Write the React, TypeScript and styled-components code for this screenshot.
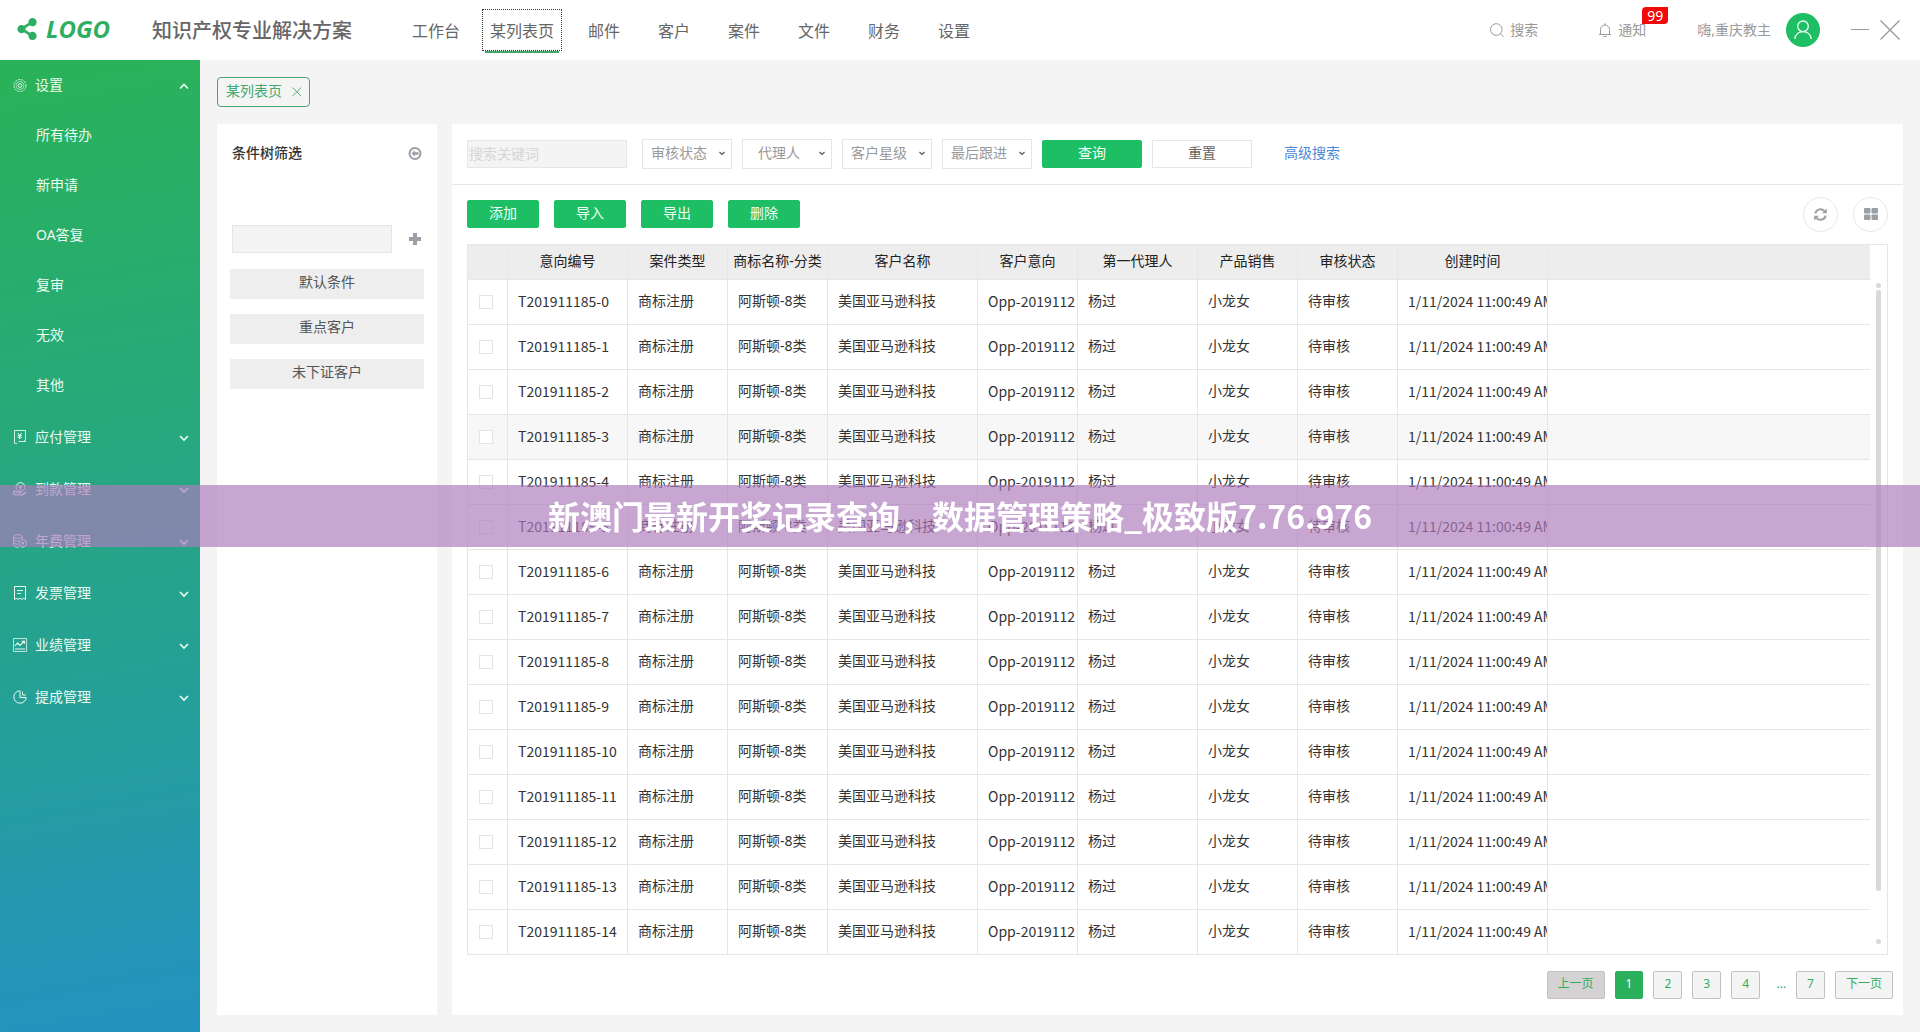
import React, { useState } from "react";
import styled, { createGlobalStyle, css } from "styled-components";
import { FaShareAlt } from "react-icons/fa";

const GREEN = "#1dbe64";
const LINE = "#e6e6e6";
const FONT = '"Noto Sans", "Noto Sans CJK SC", sans-serif';

const GlobalStyle = createGlobalStyle`
  *, *::before, *::after { box-sizing: border-box; }
  body {
    margin: 0;
    background: #f4f4f4;
    color: #333;
    font: 14px/20px ${FONT};
  }
  button, input, select { font: inherit; color: inherit; margin: 0; }
  button { padding: 0; border: 0; background: none; cursor: pointer; }
  a { color: inherit; text-decoration: none; }
  svg { display: block; flex: none; }
`;

const Page = styled.div`
  display: flex;
  flex-direction: column;
  min-height: 100vh;
`;

const Header = styled.header`
  display: flex;
  align-items: center;
  height: 60px;
  padding: 0 20px 0 16px;
  background: #fff;
`;

const Logo = styled.a`
  display: flex;
  align-items: center;
  gap: 8px;
  width: 136px;
  padding-bottom: 2px;
  color: #2eae62;
  font: italic 700 24px/28px "Open Sans", sans-serif;
`;

const Title = styled.h1`
  width: 252px;
  margin: 0;
  padding-top: 2px;
  color: #666;
  font-size: 20px;
  line-height: 28px;
  font-weight: 500;
`;

const TopNav = styled.nav`
  display: flex;
  flex: 1;
  gap: 14px;
`;

const TopLink = styled.a<{ $active?: boolean }>`
  position: relative;
  min-width: 56px;
  padding: 11px 7px 9px;
  border: 1px dotted ${(p) => (p.$active ? "#333" : "transparent")};
  color: #666;
  font-size: 16px;
  line-height: 20px;
  text-align: center;

  ${(p) =>
    p.$active &&
    css`
      &::after {
        content: "";
        position: absolute;
        left: 2px;
        right: 2px;
        bottom: -3px;
        height: 2px;
        background: #3fa56b;
      }
    `}
`;

const Tools = styled.div`
  display: flex;
  align-items: center;
  color: #999;
`;

const ToolButton = styled.button`
  position: relative;
  display: flex;
  align-items: center;
  gap: 6px;
  margin-right: 60px;
`;

const Badge = styled.span`
  position: absolute;
  left: 44px;
  top: -13px;
  padding: 0 5px;
  border-radius: 4px 0 4px 0;
  background: #f00a0a;
  color: #fff;
  line-height: 17px;
`;

const Greeting = styled.span`
  margin: 0 15px 0 -9px;
`;

const Avatar = styled.button`
  display: grid;
  place-items: center;
  width: 34px;
  height: 34px;
  margin-right: 30px;
  border-radius: 50%;
  background: ${GREEN};
`;

const WindowButton = styled.button`
  display: grid;
  place-items: center;
  width: 20px;
  height: 20px;
  & + & { margin-left: 10px; }
`;

const Body = styled.div`
  display: flex;
  flex: 1;
`;

const Sidebar = styled.nav`
  flex: none;
  width: 200px;
  background: linear-gradient(170deg, #2ab25a 2%, #27a87e 40%, #249e9c 70%, #2497b2 86%, #2393c0 100%);
  color: #e9fbf2;
`;

const Group = styled.button`
  display: flex;
  align-items: center;
  width: 100%;
  height: 50px;
  padding: 0 11px 0 13px;
  gap: 8px;
  text-align: left;
  * + & { margin-top: 2px; }
`;

const GroupName = styled.span`
  flex: 1;
`;

const SubLink = styled.a`
  display: block;
  height: 50px;
  padding-left: 36px;
  line-height: 49px;
`;

const Content = styled.main`
  display: flex;
  flex: 1;
  flex-direction: column;
  min-width: 0;
  padding: 17px;
`;

const PageTab = styled.div`
  display: flex;
  align-items: center;
  align-self: flex-start;
  gap: 10px;
  height: 30px;
  margin-bottom: 17px;
  padding: 0 7px 2px 8px;
  border: 1px solid #43a970;
  border-radius: 4px;
  color: #43a970;
`;

const Columns = styled.div`
  display: flex;
  flex: 1;
  gap: 15px;
`;

const Panel = styled.section`
  background: #fff;
`;

const TreePanel = styled(Panel)`
  flex: none;
  width: 220px;
  padding: 19px 13px;
`;

const TreeHead = styled.div`
  display: flex;
  align-items: center;
  justify-content: space-between;
  height: 20px;
  margin-bottom: 62px;
  padding: 0 1px 0 2px;
`;

const TreeTitle = styled.h2`
  margin: 0;
  color: #333;
  font-size: 14px;
  line-height: 20px;
  font-weight: 500;
`;

const AddRow = styled.div`
  display: flex;
  align-items: center;
  justify-content: space-between;
  margin-bottom: 16px;
  padding: 0 1px 0 2px;
`;

const IconButton = styled.button`
  display: grid;
  place-items: center;
  width: 16px;
  height: 16px;
  color: #9aa0a6;
`;

const TextBox = styled.input`
  width: 160px;
  height: 28px;
  padding: 0 1px 2px;
  border: 1px solid ${LINE};
  background: #f4f4f4;
  &::placeholder { color: #d6d6d6; }
`;

const PresetList = styled.div`
  display: grid;
  gap: 15px;
`;

const Preset = styled.button`
  height: 30px;
  padding-bottom: 4px;
  background: #eee;
  color: #555;
`;

const MainPanel = styled(Panel)`
  flex: 1;
  min-width: 0;
`;

const FilterBar = styled.form`
  display: flex;
  align-items: center;
  gap: 10px;
  height: 61px;
  padding: 0 15px;
  border-bottom: 1px solid ${LINE};
  ${TextBox} { margin-right: 5px; }
`;

const SelectWrap = styled.label`
  position: relative;
  svg {
    position: absolute;
    right: 7px;
    top: 12px;
    pointer-events: none;
  }
`;

const Select = styled.select`
  display: block;
  width: 90px;
  height: 30px;
  padding: 0 16px 3px 0;
  border: 1px solid ${LINE};
  border-radius: 0;
  background: #fff;
  color: #999;
  appearance: none;
  text-align: center;
  text-align-last: center;
`;

const Button = styled.button<{ $plain?: boolean; $wide?: boolean }>`
  width: ${(p) => (p.$wide ? 100 : 72)}px;
  height: 28px;
  padding-bottom: 2px;
  border: 1px solid ${(p) => (p.$plain ? LINE : GREEN)};
  border-radius: ${(p) => (p.$plain ? 0 : 2)}px;
  background: ${(p) => (p.$plain ? "#fff" : GREEN)};
  color: ${(p) => (p.$plain ? "#666" : "#f2fff7")};
`;

const AdvancedLink = styled.a`
  margin-left: 22px;
  padding-bottom: 2px;
  color: #4a88d8;
`;

const ActionBar = styled.div`
  display: flex;
  align-items: center;
  gap: 15px;
  height: 59px;
  padding: 0 15px 1px;
`;

const RoundButton = styled.button`
  display: grid;
  place-items: center;
  width: 35px;
  height: 35px;
  border: 1px solid #e8e8e8;
  border-radius: 50%;
  color: #9aa0a6;
  ${Button} + & { margin-left: auto; }
`;

const TableBox = styled.div`
  display: flex;
  margin: 0 15px 16px;
  border: 1px solid ${LINE};
`;

const Table = styled.table`
  flex: 1;
  width: 100%;
  min-width: 0;
  border-collapse: separate;
  border-spacing: 0;
  table-layout: fixed;
`;

const Col = styled.col<{ $w?: number }>`
  ${(p) => p.$w && `width: ${p.$w}px;`}
`;

const cell = css`
  border-right: 1px solid ${LINE};
  border-bottom: 1px solid ${LINE};
  overflow: hidden;
  white-space: nowrap;
  &:last-child { border-right: 0; }
`;

const Th = styled.th`
  ${cell}
  height: 35px;
  padding: 0 0 3px;
  background: #ededed;
  color: #222;
  font-weight: 400;
  text-align: center;
`;

const Td = styled.td`
  ${cell}
  height: 45px;
  padding: 0 0 3px 10px;
  &:first-child { padding-bottom: 0; }
`;

const Row = styled.tr<{ $hover?: boolean }>`
  background: ${(p) => (p.$hover ? "#f7f7f7" : "#fff")};
  &:last-child td { height: 44px; border-bottom: 0; }
`;

const CodeTd = styled(Td)`
  font-family: "Noto Sans CJK SC", "Noto Sans", sans-serif;
`;

const CheckBox = styled.input.attrs({ type: "checkbox" })`
  display: block;
  width: 14px;
  height: 14px;
  margin: 0 0 0 1px;
  border: 1px solid #e4e4e4;
  background: #fff;
  appearance: none;
  &:checked { background: ${GREEN}; }
`;

const ScrollTrack = styled.div`
  display: flex;
  flex-direction: column;
  align-items: center;
  width: 17px;
  padding: 38px 0 10px;
`;

const Dot = styled.span`
  width: 5px;
  height: 5px;
  border-radius: 50%;
  background: #d9d9d9;
`;

const Thumb = styled.span`
  width: 5px;
  flex: 25;
  margin-top: 2px;
  border-radius: 3px;
  background: #d9d9d9;
`;

const TrackRest = styled.span`
  flex: 2;
`;

const Pager = styled.nav`
  display: flex;
  justify-content: flex-end;
  gap: 10px;
  padding: 0 10px 16px;
  color: #2fae62;
  font-size: 12px;
`;

const PageButton = styled.button<{ $on?: boolean }>`
  min-width: 28px;
  height: 28px;
  padding: 0 10px 2px;
  border: 1px solid ${(p) => (p.$on ? "#2ab05b" : "#c4c0c0")};
  border-radius: 2px;
  background: ${(p) => (p.$on ? "#2ab05b" : "#f4f4f4")};
  color: ${(p) => (p.$on ? "#fff" : "#2fae62")};
  &:disabled { background: #d4d2d2; color: #2fae62; cursor: default; }
`;

const Ellipsis = styled.span`
  width: 16px;
  line-height: 26px;
  text-align: right;
`;

const Banner = styled.div`
  position: fixed;
  left: 0;
  right: 0;
  top: 47%;
  height: 62px;
  background: rgba(173, 122, 188, 0.67);
  color: #fff;
  font: 700 32px/60px "Noto Sans CJK SC", sans-serif;
  text-align: center;
  pointer-events: none;
`;

const Icon = ({
  size = 14,
  w = 1,
  children,
}: {
  size?: number;
  w?: number;
  children: React.ReactNode;
}) => (
  <svg
    width={size}
    height={size}
    viewBox={`0 0 ${size} ${size}`}
    fill="none"
    stroke="currentColor"
    strokeWidth={w}
    aria-hidden="true"
  >
    {children}
  </svg>
);

const Chevron = ({ up }: { up?: boolean }) => (
  <Icon size={10} w={1.7}>
    <path d={up ? "M1 8.500 5 4.500 9 8.500" : "M1 4 5 8 9 4"} />
  </Icon>
);

const yen = "M4.800 3 6.700 5.400 8.600 3M4.600 5.600h4.200M4.600 7.300h4.200M6.700 5.400V9.200";

const groupIcons: Record<string, React.ReactNode> = {
  设置: (
    <>
      <circle cx="7" cy="7.500" r="1.800" />
      <circle cx="7" cy="7.500" r="4" strokeWidth=".6" />
      <circle cx="7" cy="7.500" r="6" strokeWidth=".9" strokeDasharray="2.200 1" />
    </>
  ),
  应付管理: (
    <>
      <path d="M1.500 13V.5h11V10M1.500 13.500H4M5.500 11.500H13l-2-1.500" strokeWidth=".9" />
      <path d={yen} />
    </>
  ),
  到款管理: (
    <>
      <circle cx="7.500" cy="5" r="4.400" />
      <path d="M5.700 2.800 7.500 5l1.800-2.200M5.600 5.200h3.800M7.500 5v3" />
      <path d="M.7 8.500v4.600M.7 9.600c2-1 3 .9 5 .9h3M2 12.900h7.500l3.700-3" strokeWidth="1.400" />
    </>
  ),
  年费管理: (
    <>
      <ellipse cx="5" cy="2.500" rx="4.300" ry="1.800" />
      <path d="M.7 2.500v8.800c0 1 2 1.900 4.800 1.900M9.300 2.500v2M.7 5.500c0 1 2 1.800 5 1.700M.7 8.500c0 1 2 1.700 4.400 1.700" />
      <circle cx="9.800" cy="9.300" r="3.800" />
      <path d="M8.400 7.400 9.800 9l1.400-1.600M8.300 9.400h3M9.800 9v2.600" />
    </>
  ),
  发票管理: (
    <path d="M1.500.5h11v13l-1.800-1.200L9 13.400l-2-1.100-2 1.100-1.800-1.100-1.700 1.200zM4 4.500h6M4 7.500h4" />
  ),
  业绩管理: (
    <>
      <path d="M.5.5h13v13H.5z" opacity=".75" />
      <path d="M2 7.800 4.700 5l2 2.500L11 3.600M8.800 3.400h2.600v2.400M2 11h10" strokeWidth="1.200" />
    </>
  ),
  提成管理: (
    <path d="M7 .8A6.200 6.200 0 1 0 13.200 7.500H7zM9.500 1.500v3.500h3.300" />
  ),
};

const subItems = ["所有待办", "新申请", "OA答复", "复审", "无效", "其他"];
const navItems = ["工作台", "某列表页", "邮件", "客户", "案件", "文件", "财务", "设置"];
const filters = ["审核状态", "代理人", "客户星级", "最后跟进"];
const presets = ["默认条件", "重点客户", "未下证客户"];
const actions = ["添加", "导入", "导出", "删除"];

const columns: [string, number | undefined][] = [
  ["", 40],
  ["意向编号", 120],
  ["案件类型", 100],
  ["商标名称-分类", 100],
  ["客户名称", 150],
  ["客户意向", 100],
  ["第一代理人", 120],
  ["产品销售", 100],
  ["审核状态", 100],
  ["创建时间", 150],
  ["", undefined],
];

const rows = Array.from({ length: 15 }, (_, i) => `T201911185-${i}`);

export default function App() {
  const [open, setOpen] = useState(true);

  return (
    <>
      <GlobalStyle />
      <Page>
        <Header>
          <Logo href="#">
            <FaShareAlt size={22} />
            LOGO
          </Logo>
          <Title>知识产权专业解决方案</Title>
          <TopNav>
            {navItems.map((name) => (
              <TopLink key={name} href="#" $active={name === "某列表页"}>
                {name}
              </TopLink>
            ))}
          </TopNav>
          <Tools>
            <ToolButton>
              <Icon>
                <circle cx="6.300" cy="6.500" r="5.800" />
                <path d="m10.500 10.700 3 3" />
              </Icon>
              搜索
            </ToolButton>
            <ToolButton>
              <Icon>
                <path d="M1 11.500h12M2.500 11.500V6.600a4.500 4.500 0 0 1 9 0v4.900M7 .3v1.900M5.300 13.400h3.400" />
              </Icon>
              通知
              <Badge>99</Badge>
            </ToolButton>
            <Greeting>嗨,重庆教主</Greeting>
            <Avatar aria-label="重庆教主">
              <svg width="20" height="20" viewBox="0 0 20 20" fill="none" stroke="#e9fff2" strokeWidth="1.300">
                <circle cx="10" cy="6.300" r="5.300" />
                <path d="M1.800 19c.6-4.600 4-7.400 8.200-7.400s7.600 2.800 8.200 7.400" />
              </svg>
            </Avatar>
            <WindowButton aria-label="最小化">
              <Icon size={20}>
                <path d="M1 9.500h18" />
              </Icon>
            </WindowButton>
            <WindowButton aria-label="关闭">
              <Icon size={20} w={1.3}>
                <path d="m.5.5 19 19m0-19-19 19" />
              </Icon>
            </WindowButton>
          </Tools>
        </Header>

        <Body>
          <Sidebar>
            {Object.entries(groupIcons).map(([name, icon]) => (
              <React.Fragment key={name}>
                <Group onClick={() => name === "设置" && setOpen(!open)}>
                  <Icon>{icon}</Icon>
                  <GroupName>{name}</GroupName>
                  <Chevron up={name === "设置" && open} />
                </Group>
                {name === "设置" &&
                  open &&
                  subItems.map((sub) => (
                    <SubLink key={sub} href="#">
                      {sub}
                    </SubLink>
                  ))}
              </React.Fragment>
            ))}
          </Sidebar>

          <Content>
            <PageTab>
              某列表页
              <button aria-label="关闭标签">
                <Icon size={10}>
                  <path d="m.5 1.500 8.500 8.500m0-8.500L.5 10" strokeWidth=".9" />
                </Icon>
              </button>
            </PageTab>

            <Columns>
              <TreePanel>
                <TreeHead>
                  <TreeTitle>条件树筛选</TreeTitle>
                  <IconButton aria-label="收起">
                    <Icon w={2}>
                      <circle cx="7" cy="7.500" r="5.500" />
                      <path d="M3.500 7.500 7 4.300v2h3.500v2.400H7v2z" fill="currentColor" stroke="none" />
                    </Icon>
                  </IconButton>
                </TreeHead>
                <AddRow>
                  <TextBox aria-label="条件名称" />
                  <IconButton aria-label="新增">
                    <Icon size={12} w={4}>
                      <path d="M6 0v12M0 6h12" />
                    </Icon>
                  </IconButton>
                </AddRow>
                <PresetList>
                  {presets.map((name) => (
                    <Preset key={name}>{name}</Preset>
                  ))}
                </PresetList>
              </TreePanel>

              <MainPanel>
                <FilterBar onSubmit={(e) => e.preventDefault()}>
                  <TextBox placeholder="搜索关键词" aria-label="搜索关键词" />
                  {filters.map((name) => (
                    <SelectWrap key={name}>
                      <Select aria-label={name}>
                        <option>{name}</option>
                      </Select>
                      <svg width="6" height="5" viewBox="0 0 6 5" fill="none" stroke="#555" strokeWidth="1.200">
                        <path d="M.5 1 3 3.500 5.500 1" />
                      </svg>
                    </SelectWrap>
                  ))}
                  <Button $wide type="submit">
                    查询
                  </Button>
                  <Button $wide $plain type="reset">
                    重置
                  </Button>
                  <AdvancedLink href="#">高级搜索</AdvancedLink>
                </FilterBar>

                <ActionBar>
                  {actions.map((name) => (
                    <Button key={name}>{name}</Button>
                  ))}
                  <RoundButton aria-label="刷新">
                    <svg width="13" height="13" viewBox="0 0 13 13" fill="none" stroke="currentColor" strokeWidth="2">
                      <path d="M1.300 5.500A5.200 5.200 0 0 1 10.500 3.200M11.700 7.500A5.200 5.200 0 0 1 2.500 9.800" />
                      <path d="M12.800.5v4.800H8zM.2 12.500V7.700H5z" fill="currentColor" stroke="none" />
                    </svg>
                  </RoundButton>
                  <RoundButton aria-label="视图">
                    <svg width="14" height="12" viewBox="0 0 14 12" fill="currentColor">
                      <rect width="6.500" height="5.500" rx="1" />
                      <rect x="7.500" width="6.500" height="5.500" rx="1" />
                      <rect y="6.500" width="6.500" height="5.500" rx="1" />
                      <rect x="7.500" y="6.500" width="6.500" height="5.500" rx="1" />
                    </svg>
                  </RoundButton>
                </ActionBar>

                <TableBox>
                  <Table>
                    <colgroup>
                      {columns.map(([, w], i) => (
                        <Col key={i} $w={w} />
                      ))}
                    </colgroup>
                    <thead>
                      <tr>
                        {columns.map(([name], i) => (
                          <Th key={i}>{name}</Th>
                        ))}
                      </tr>
                    </thead>
                    <tbody>
                      {rows.map((id, i) => (
                        <Row key={id} $hover={i === 3}>
                          <Td>
                            <CheckBox aria-label={id} />
                          </Td>
                          <CodeTd>{id}</CodeTd>
                          <Td>商标注册</Td>
                          <Td>阿斯顿-8类</Td>
                          <Td>美国亚马逊科技</Td>
                          <CodeTd>Opp-2019112</CodeTd>
                          <Td>杨过</Td>
                          <Td>小龙女</Td>
                          <Td>待审核</Td>
                          <CodeTd>1/11/2024 11:00:49 AM</CodeTd>
                          <Td />
                        </Row>
                      ))}
                    </tbody>
                  </Table>
                  <ScrollTrack>
                    <Dot />
                    <Thumb />
                    <TrackRest />
                    <Dot />
                  </ScrollTrack>
                </TableBox>

                <Pager aria-label="分页">
                  <PageButton disabled>上一页</PageButton>
                  <PageButton $on>1</PageButton>
                  <PageButton>2</PageButton>
                  <PageButton>3</PageButton>
                  <PageButton>4</PageButton>
                  <Ellipsis>...</Ellipsis>
                  <PageButton>7</PageButton>
                  <PageButton>下一页</PageButton>
                </Pager>
              </MainPanel>
            </Columns>
          </Content>
        </Body>
      </Page>
      <Banner>新澳门最新开奖记录查询，数据管理策略_极致版7.76.976</Banner>
    </>
  );
}
